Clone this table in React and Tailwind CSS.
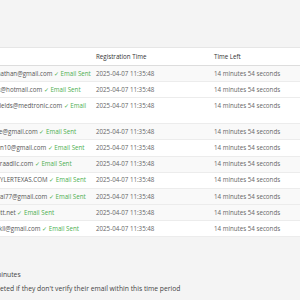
export default function App() {
  const rows = [
    { email: "marcusjonathan@gmail.com", gray: true },
    { email: "michaelwk@hotmail.com", gray: false },
    { email: "jonathan.fields@medtronic.com", gray: false, wrap: true },
    { email: "jake.moore@gmail.com", gray: true },
    { email: "kevinbrown10@gmail.com", gray: false },
    { email: "admin@turaadllc.com", gray: true },
    { email: "HIRING@TYLERTEXAS.COM", gray: false },
    { email: "dragonroyal77@gmail.com", gray: true },
    { email: "mjones@att.net", gray: true },
    { email: "jamesblackll@gmail.com", gray: false },
  ];
  return (
    <div
      className="w-[300px] h-[300px] overflow-hidden bg-[#f4f4f4] text-[#555]"
      style={{ fontFamily: '"Open Sans", "Noto Sans", sans-serif' }}
    >
      <div className="pt-[47px] ml-[-138px]">
        <table className="table-fixed border-collapse bg-white text-[6.2px] leading-[9.6px] w-[484px] border-t border-[#e6e6e6]">
          <colgroup>
            <col className="w-[100px]" />
            <col className="w-[126px]" />
            <col className="w-[118px]" />
            <col className="w-[140px]" />
          </colgroup>
          <thead>
            <tr className="border-b border-[#dddddd]">
              <th className="text-left font-normal text-[#333] px-[8px] py-[3.7px]">Username</th>
              <th className="text-left font-normal text-[#333] px-[8px] py-[3.7px]">Email</th>
              <th className="text-left font-normal text-[#333] px-[8px] py-[3.7px]">Registration Time</th>
              <th className="text-left font-normal text-[#333] px-[8px] py-[3.7px]">Time Left</th>
            </tr>
          </thead>
          <tbody>
            {rows.map((r, i) => (
              <tr key={i} className={`border-b border-[#ececec] ${r.gray ? "bg-[#f9f9f9]" : "bg-white"}`}>
                <td className="px-[8px] py-[2.8px] align-top whitespace-nowrap">user{i + 1}</td>
                <td className="px-[8px] py-[2.8px] align-top whitespace-nowrap">
                  {r.email}{" "}
                  {r.wrap ? (
                    <span className="text-[#4caf50]">
                      ✓ Email
                      <br />
                      Sent
                    </span>
                  ) : (
                    <span className="text-[#4caf50]">✓ Email Sent</span>
                  )}
                </td>
                <td className="px-[8px] py-[2.8px] align-top whitespace-nowrap text-[#666]">2025-04-07 11:35:48</td>
                <td className="px-[8px] py-[2.8px] align-top whitespace-nowrap text-[#666]">14 minutes 54 seconds</td>
              </tr>
            ))}
          </tbody>
        </table>
      </div>
      <div className="ml-[-49px] mt-[31px] text-[6.75px] text-[#444] whitespace-nowrap leading-[14px]">
        <p>Time limit: 15 minutes</p>
        <p className="ml-[-2px]">Users will be deleted if they don't verify their email within this time period</p>
      </div>
    </div>
  );
}
